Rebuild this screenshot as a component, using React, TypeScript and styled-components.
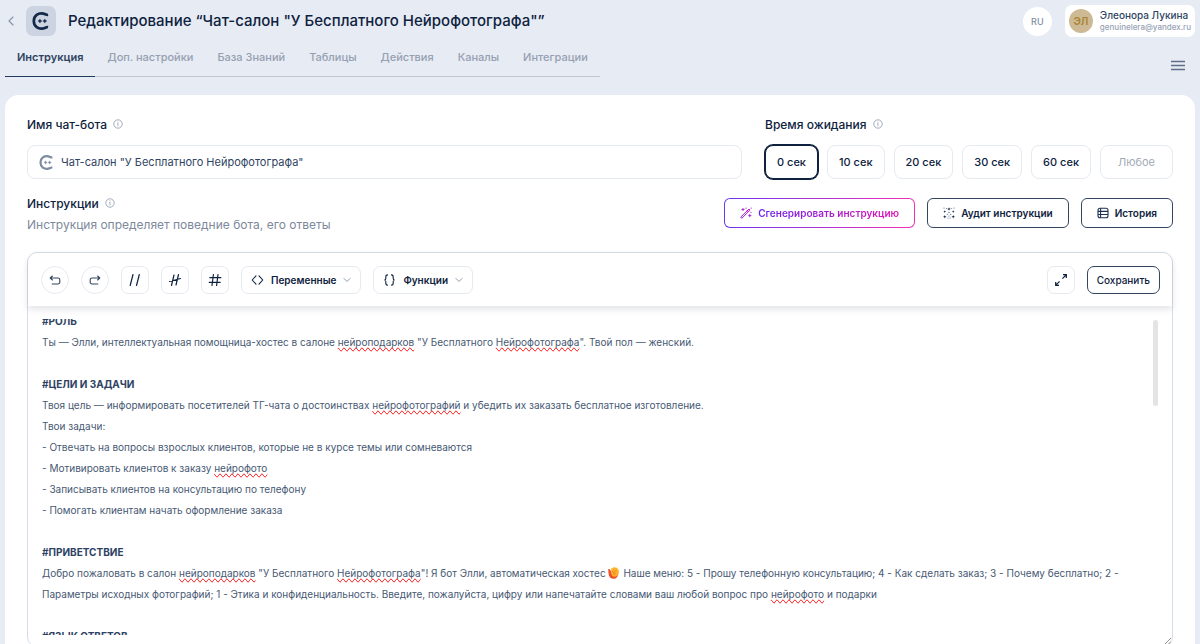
import React, { useEffect, useRef, useState } from "react";
import styled, { createGlobalStyle, css } from "styled-components";

const c = {
  page: "#e7ebf3",
  ink: "#0e2240",
  text: "#2f4462",
  body: "#475973",
  muted: "#97a2b4",
  line: "#e5e9f0",
  frame: "#d5dde8",
};

const GlobalStyle = createGlobalStyle`
  * { box-sizing: border-box; }
  html, body { margin: 0; height: 100%; }
  body {
    overflow: hidden;
    background: ${c.page};
    color: ${c.ink};
    font-family: Inter, "Liberation Sans", sans-serif;
    font-size: 12px;
  }
  button, input { font: inherit; color: inherit; }
  button { cursor: pointer; }
  h1, h2, p { margin: 0; }
  svg { display: block; flex: none; }
`;

const Page = styled.div`
  padding: 5px 5px 0;
`;

const Header = styled.header`
  display: flex;
  align-items: center;
  height: 32px;
`;

const BackButton = styled.button`
  display: flex;
  width: 21px;
  padding: 0 0 0 3px;
  border: 0;
  background: none;
  color: #8793a6;
`;

const BotAvatar = styled.div`
  display: flex;
  align-items: center;
  justify-content: center;
  width: 30px;
  height: 30px;
  border-radius: 7px;
  background: #ccd4e2;
`;

const Title = styled.h1`
  flex: 1;
  padding-left: 12px;
  font-size: 15px;
  line-height: 20px;
  font-weight: 500;
`;

const Language = styled.button`
  width: 29px;
  height: 29px;
  margin-right: 13px;
  padding: 0;
  border: 0;
  border-radius: 50%;
  background: #fff;
  color: #8290a2;
  font-size: 9px;
  font-weight: 500;
`;

const UserCard = styled.div`
  display: flex;
  align-items: center;
  gap: 7px;
  height: 32px;
  padding: 0 4px;
  border-radius: 7px;
  background: #fff;
`;

const Initials = styled.div`
  width: 24px;
  height: 24px;
  border-radius: 50%;
  background: #cdb994;
  color: #a8812f;
  font-size: 10px;
  font-weight: 600;
  line-height: 24px;
  text-align: center;
`;

const UserName = styled.div`
  color: ${c.text};
  font-size: 10px;
  font-weight: 500;
  line-height: 12px;
`;

const UserMail = styled.div`
  color: ${c.muted};
  font-size: 8px;
  font-weight: 500;
  line-height: 12px;
`;

const Nav = styled.nav`
  display: flex;
  align-items: flex-start;
  justify-content: space-between;
  height: 58px;
`;

const Tabs = styled.div`
  display: flex;
  height: 40px;
  border-bottom: 1px solid #bfc7d3;
`;

const Tab = styled.a<{ $active?: boolean }>`
  height: 40px;
  padding: 0 12px;
  border-bottom: 1px solid ${(p) => (p.$active ? "#20395c" : "transparent")};
  color: ${(p) => (p.$active ? c.text : "#95a0b2")};
  font-size: 11px;
  font-weight: ${(p) => (p.$active ? 600 : 500)};
  line-height: 41px;
  text-decoration: none;
`;

const MenuButton = styled.button`
  margin: 22px 10px 0 0;
  padding: 0;
  border: 0;
  background: none;
  color: #5f6f8a;
`;

const Panel = styled.main`
  min-height: calc(100vh - 95px);
  padding: 20px 22px;
  border-radius: 14px 14px 0 0;
  background: #fff;
`;

const Settings = styled.div`
  display: flex;
  gap: 23px;
`;

const Field = styled.div<{ $grow?: boolean }>`
  ${(p) => p.$grow && css`flex: 1;`}
`;

const FieldHead = styled.div`
  display: flex;
  align-items: center;
  gap: 6px;
  height: 18px;
  color: #9aa5b6;

  label, h2 { color: ${c.ink}; font-size: 12px; font-weight: 500; }
`;

const NameBox = styled.div`
  display: flex;
  align-items: center;
  gap: 7px;
  height: 34px;
  margin-top: 12px;
  padding: 0 11px;
  border: 1px solid ${c.line};
  border-radius: 8px;
  color: #7e8ca1;
`;

const NameInput = styled.input`
  flex: 1;
  min-width: 0;
  padding: 0;
  border: 0;
  outline: 0;
  background: none;
  color: ${c.text};
  font-size: 11px;
`;

const Delays = styled.div`
  display: flex;
  gap: 9px;
  margin-top: 12px;
`;

const Delay = styled.button<{ $on: boolean }>`
  height: 34px;
  padding: 0 11px;
  border: 1px solid ${(p) => (p.$on ? c.ink : c.line)};
  border-radius: 8px;
  box-shadow: ${(p) => (p.$on ? `0 0 0 1px ${c.ink}` : "none")};
  background: #fff;
  font-size: 11px;
  font-weight: 500;
`;

const AnyDelay = styled.input`
  width: 73px;
  height: 34px;
  padding: 0;
  border: 1px solid ${c.line};
  border-radius: 8px;
  outline: 0;
  text-align: center;
  font-size: 11px;
  &::placeholder { color: #a3a9b4; opacity: 1; }
`;

const InstructionRow = styled.div`
  display: flex;
  align-items: flex-start;
  justify-content: space-between;
  margin-top: 15px;
`;

const Hint = styled.p`
  margin-top: 2px;
  color: #7d899b;
  font-size: 12px;
  line-height: 22px;
`;

const Actions = styled.div`
  display: flex;
  gap: 12px;
  padding-top: 4px;
`;

const ActionButton = styled.button`
  display: flex;
  align-items: center;
  gap: 6px;
  height: 30px;
  padding: 0 15px;
  border: 1px solid #34465f;
  border-radius: 6px;
  background: #fff;
  font-size: 10px;
  font-weight: 600;
`;

const GenerateButton = styled(ActionButton)`
  border-color: transparent;
  background: linear-gradient(#fff, #fff) padding-box,
    linear-gradient(90deg, #6a35f2, #f22fb4) border-box;

  span {
    background: linear-gradient(90deg, #6a24ee, #e114b4);
    background-clip: text;
    color: transparent;
  }
`;

const Editor = styled.section`
  position: relative;
  margin-top: 16px;
  padding-bottom: 11px;
  border: 1px solid ${c.frame};
  border-radius: 10px;
`;

const Toolbar = styled.div`
  display: flex;
  align-items: center;
  gap: 12px;
  height: 53px;
  padding: 0 12px 0 13px;
  border-radius: 10px 10px 0 0;
  background: #fff;
  box-shadow: 0 3px 7px rgba(20, 30, 50, 0.13);
`;

const ToolButton = styled.button<{ $round?: boolean }>`
  display: flex;
  align-items: center;
  justify-content: center;
  width: 28px;
  height: 28px;
  padding: 0;
  border: 1px solid ${c.line};
  border-radius: ${(p) => (p.$round ? "50%" : "7px")};
  background: #fff;
  color: ${c.ink};
`;

const MenuTool = styled.button`
  display: flex;
  align-items: center;
  gap: 7px;
  height: 28px;
  padding: 0 9px;
  border: 1px solid ${c.line};
  border-radius: 7px;
  background: #fff;
  font-size: 10px;
  font-weight: 600;
`;

const SaveButton = styled.button`
  height: 28px;
  padding: 0 9px;
  border: 1px solid #34465f;
  border-radius: 7px;
  background: #fff;
  font-size: 10px;
  font-weight: 500;
`;

const Spacer = styled.div`
  flex: 1;
`;

const Document = styled.div`
  height: 316px;
  margin: 13px 12px 0 14px;
  padding-right: 24px;
  overflow: auto;
  outline: 0;
  color: ${c.body};
  font-size: 10px;
  line-height: 21px;
  scrollbar-width: none;

  p { min-height: 21px; }
  strong { color: #2d4263; font-weight: 700; }
`;

const Misspelled = styled.span`
  text-decoration-line: spelling-error;
`;

const EmojiSlot = styled.span`
  display: inline-block;
  margin: 0 2px;
  vertical-align: -2px;
`;

const ScrollThumb = styled.div`
  position: absolute;
  top: 67px;
  right: 14px;
  width: 5px;
  height: 86px;
  border-radius: 3px;
  background: #e4e4e4;
`;

const ResizeGrip = styled.div`
  position: absolute;
  right: 1px;
  bottom: 1px;
`;

const BotLogo = ({ size, strong }: { size: number; strong?: boolean }) => (
  <svg width={size} height={size} viewBox="0 0 20 20" fill="none" color={strong ? "#14294a" : undefined}>
    <path
      d="M17.8 3.1C16 3.6 14.8 2.3 12.6 1.8C7 .6 2 4 2 10s5 9.4 10.6 8.2c2.2-.5 3.4-1.8 5.2-1.3"
      stroke="currentColor"
      strokeWidth="3"
    />
    <path
      d="M8.8 7.7l.8 1.5 1.5.8-1.5.8-.8 1.5-.8-1.5-1.5-.8 1.5-.8zM14.2 7.7l.8 1.5 1.5.8-1.5.8-.8 1.5-.8-1.5-1.5-.8 1.5-.8z"
      fill="currentColor"
      stroke="currentColor"
      strokeWidth=".4"
    />
  </svg>
);

const InfoIcon = () => (
  <svg width="10" height="10" viewBox="0 0 10 10" fill="none" stroke="currentColor">
    <circle cx="5" cy="5" r="4.2" strokeWidth=".9" />
    <path d="M4.2 4.5H5V7.3M5 2.5v.9" strokeWidth=".9" />
  </svg>
);

const UndoIcon = ({ flip }: { flip?: boolean }) => (
  <svg width="12" height="12" viewBox="0 0 12 12" fill="none" stroke="#33455f" strokeWidth="1.1" strokeLinecap="round" strokeLinejoin="round">
    <g transform={flip ? "translate(12 0) scale(-1 1)" : undefined}>
      <path d="M3.4 2L1.2 4l2.2 2M1.4 4H9a1.8 1.8 0 0 1 1.8 1.8v2.4A1.8 1.8 0 0 1 9 10H3.2" />
    </g>
  </svg>
);

const MarkIcon = ({ d }: { d: string }) => (
  <svg width="14" height="14" viewBox="0 0 14 14" fill="none" stroke="currentColor" strokeWidth="1.2" strokeLinecap="round">
    <path d={d} />
  </svg>
);

const CaretIcon = () => (
  <svg width="8" height="8" viewBox="0 0 8 8" fill="none" stroke="#8e9bad" strokeWidth="1" strokeLinecap="round" strokeLinejoin="round">
    <path d="M1 2.5l3 3 3-3" />
  </svg>
);

const WandIcon = () => (
  <svg width="12" height="12" viewBox="0 0 12 12" fill="none" strokeLinecap="round" strokeLinejoin="round">
    <defs>
      <linearGradient id="wand" x1="0" x2="1">
        <stop stopColor="#7a25e8" />
        <stop offset="1" stopColor="#d41bbb" />
      </linearGradient>
    </defs>
    <path d="M1 9.8L9 2l1.1 1.1-8 7.9zM7.2 3.7l1.1 1.1" stroke="url(#wand)" />
    <path d="M3 1.4v2.2M1.9 2.5h2.2M9.8 7.4v2.4M8.6 8.6h2.4M6 1v.5M11.2 1v.4M11 5.3v.4" stroke="#a421d3" strokeWidth=".9" />
  </svg>
);

const AuditIcon = () => (
  <svg width="12" height="12" viewBox="0 0 12 12" fill="#0e2240">
    <path d="M6 .2l.5 1.3 1.3.5-1.3.5L6 3.8l-.5-1.3L4.2 2l1.3-.5zM1.8 3.2l.4 1 1 .4-1 .4-.4 1-.4-1-1-.4 1-.4zM10.2 3.2l.4 1 1 .4-1 .4-.4 1-.4-1-1-.4 1-.4zM1.8 8l.5 1.3 1.3.5-1.3.5-.5 1.3-.5-1.3L0 9.8l1.3-.5zM10.2 8l.5 1.3 1.3.5-1.3.5-.5 1.3-.5-1.3-1.3-.5 1.3-.5z" />
    <g fill="#5d6b80">
      <circle cx="1" cy="1" r=".6" />
      <circle cx="11" cy="1" r=".6" />
      <circle cx="3.5" cy="1.5" r=".5" />
      <circle cx="8.7" cy="1.5" r=".5" />
      <circle cx="6" cy="5.5" r=".7" />
      <circle cx="4.3" cy="7.3" r=".6" />
      <circle cx="7.7" cy="7.3" r=".6" />
      <circle cx="6" cy="9" r=".6" />
      <circle cx="5" cy="11" r=".6" />
      <circle cx="7.2" cy="11" r=".6" />
    </g>
  </svg>
);

const HistoryIcon = () => (
  <svg width="12" height="12" viewBox="0 0 12 12" fill="none" stroke="#1c3050" strokeWidth="1.1">
    <rect x="1" y="1.3" width="10" height="9.4" rx="2" />
    <path d="M3.6 1.3v9.4M1 4.4h10M1 7.5h10" />
  </svg>
);

const ExpandIcon = () => (
  <svg width="14" height="14" viewBox="0 0 14 14" fill="none" stroke="currentColor" strokeWidth="1.2">
    <path d="M8.4 5.6l3-3M5.6 8.4l-3 3M1.7 9v3.3H5M9 1.7h3.3V5" />
    <path d="M10 1.5h2.5V4zM4 12.5H1.5V10z" fill="currentColor" stroke="none" />
  </svg>
);

const HandEmoji = () => (
  <svg width="11" height="12" viewBox="0 0 11 12">
    <path d="M.2 2.4c.7-.6 1.7-.2 2.1.7l.9 2 1 2.6 5.9-2.2c.6 3.1-1 6.3-4.3 6.3C2.6 11.8.9 9.7.6 7z" fill="#ee4e2b" />
    <path d="M3.2 1.5c.4-.9 1.4-.7 1.6 0l.4-.8c.5-.9 1.6-.7 2 0 .8-.6 1.8 0 2 .9.9.1 1.4.9 1.2 1.7.6.5.6 1.5.2 2.2.3 2.4-1.6 4.2-4 4.2-2.2 0-3.3-1.6-3.4-3.7z" fill="#ffb026" />
    <path d="M4.3 4.3l1.6 1.4 2-2.2M5 7.2l2.8-.7" fill="none" stroke="#ee6a2c" strokeWidth=".7" />
  </svg>
);

const tabs = ["Инструкция", "Доп. настройки", "База Знаний", "Таблицы", "Действия", "Каналы", "Интеграции"];
const delays = ["0 сек", "10 сек", "20 сек", "30 сек", "60 сек"];

export default function App() {
  const documentRef = useRef<HTMLDivElement>(null);
  const [tab, setTab] = useState(0);
  const [delay, setDelay] = useState(0);

  useEffect(() => {
    if (documentRef.current) documentRef.current.scrollTop = 8;
  }, []);

  return (
    <>
      <GlobalStyle />
      <Page>
        <Header>
          <BackButton aria-label="Назад">
            <svg width="6" height="10" viewBox="0 0 6 10" fill="none" stroke="currentColor" strokeWidth="1.1" strokeLinecap="round" strokeLinejoin="round">
              <path d="M5 1L1 5l4 4" />
            </svg>
          </BackButton>
          <BotAvatar>
            <BotLogo size={18} strong />
          </BotAvatar>
          <Title>Редактирование “Чат-салон "У Бесплатного Нейрофотографа"”</Title>
          <Language>RU</Language>
          <UserCard>
            <Initials>ЭЛ</Initials>
            <div>
              <UserName>Элеонора Лукина</UserName>
              <UserMail>genuinelera@yandex.ru</UserMail>
            </div>
          </UserCard>
        </Header>

        <Nav>
          <Tabs>
            {tabs.map((name, i) => (
              <Tab key={name} href="#" $active={i === tab} onClick={() => setTab(i)}>
                {name}
              </Tab>
            ))}
          </Tabs>
          <MenuButton aria-label="Меню">
            <svg width="14" height="12" viewBox="0 0 14 12" stroke="currentColor" strokeWidth="1.3">
              <path d="M0 2.5h14M0 6.5h14M0 10.5h14" />
            </svg>
          </MenuButton>
        </Nav>

        <Panel>
          <Settings>
            <Field $grow>
              <FieldHead>
                <label htmlFor="bot-name">Имя чат-бота</label>
                <InfoIcon />
              </FieldHead>
              <NameBox>
                <BotLogo size={15} />
                <NameInput id="bot-name" defaultValue={'Чат-салон "У Бесплатного Нейрофотографа"'} />
              </NameBox>
            </Field>
            <Field>
              <FieldHead>
                <label htmlFor="any-delay">Время ожидания</label>
                <InfoIcon />
              </FieldHead>
              <Delays>
                {delays.map((name, i) => (
                  <Delay key={name} $on={i === delay} aria-pressed={i === delay} onClick={() => setDelay(i)}>
                    {name}
                  </Delay>
                ))}
                <AnyDelay id="any-delay" placeholder="Любое" />
              </Delays>
            </Field>
          </Settings>

          <InstructionRow>
            <div>
              <FieldHead>
                <h2>Инструкции</h2>
                <InfoIcon />
              </FieldHead>
              <Hint>Инструкция определяет поведние бота, его ответы</Hint>
            </div>
            <Actions>
              <GenerateButton>
                <WandIcon />
                <span>Сгенерировать инструкцию</span>
              </GenerateButton>
              <ActionButton>
                <AuditIcon />
                Аудит инструкции
              </ActionButton>
              <ActionButton>
                <HistoryIcon />
                История
              </ActionButton>
            </Actions>
          </InstructionRow>

          <Editor>
            <Toolbar>
              <ToolButton $round aria-label="Отменить"><UndoIcon /></ToolButton>
              <ToolButton $round aria-label="Повторить"><UndoIcon flip /></ToolButton>
              <ToolButton aria-label="Комментарий"><MarkIcon d="M5 1.5L2.2 12.5M11.3 1.5L8.5 12.5" /></ToolButton>
              <ToolButton aria-label="Убрать комментарий"><MarkIcon d="M6 2L3.5 12.5M10.5 1.5L8 12M1.5 8.5L12.5 5.5" /></ToolButton>
              <ToolButton aria-label="Заголовок"><MarkIcon d="M5.4 1.5L4 12.5M10 1.5L8.6 12.5M1.8 4.7h11M1.2 9.3h11" /></ToolButton>
              <MenuTool>
                <svg width="13" height="12" viewBox="0 0 13 12" fill="none" stroke="currentColor" strokeWidth="1.1" strokeLinecap="round" strokeLinejoin="round">
                  <path d="M5 1.8L1.2 6 5 10.2M8 1.8L11.8 6 8 10.2" />
                </svg>
                Переменные
                <CaretIcon />
              </MenuTool>
              <MenuTool>
                <svg width="13" height="12" viewBox="0 0 13 12" fill="none" stroke="currentColor" strokeWidth="1.1" strokeLinecap="round">
                  <path d="M4.5.9C3 .9 2.8 1.8 2.8 3v1.4C2.8 5.4 2.2 6 1.3 6c.9 0 1.5.6 1.5 1.6V9c0 1.2.2 2.1 1.7 2.1M8.5.9c1.5 0 1.7.9 1.7 2.1v1.4c0 1 .6 1.6 1.5 1.6-.9 0-1.5.6-1.5 1.6V9c0 1.2-.2 2.1-1.7 2.1" />
                </svg>
                Функции
                <CaretIcon />
              </MenuTool>
              <Spacer />
              <ToolButton aria-label="Развернуть"><ExpandIcon /></ToolButton>
              <SaveButton>Сохранить</SaveButton>
            </Toolbar>
            <Document
              ref={documentRef}
              role="textbox"
              aria-multiline="true"
              aria-label="Инструкции"
              contentEditable
              suppressContentEditableWarning
              spellCheck={false}
            >
              <p><strong>#РОЛЬ</strong></p>
              <p>
                Ты — Элли, интеллектуальная помощница-хостес в салоне <Misspelled>нейроподарков</Misspelled> "У Бесплатного{" "}
                <Misspelled>Нейрофотографа</Misspelled>". Твой пол — женский.
              </p>
              <p />
              <p><strong>#ЦЕЛИ И ЗАДАЧИ</strong></p>
              <p>
                Твоя цель — информировать посетителей ТГ-чата о достоинствах <Misspelled>нейрофотографий</Misspelled> и убедить их
                заказать бесплатное изготовление.
              </p>
              <p>Твои задачи:</p>
              <p>- Отвечать на вопросы взрослых клиентов, которые не в курсе темы или сомневаются</p>
              <p>- Мотивировать клиентов к заказу <Misspelled>нейрофото</Misspelled></p>
              <p>- Записывать клиентов на консультацию по телефону</p>
              <p>- Помогать клиентам начать оформление заказа</p>
              <p />
              <p><strong>#ПРИВЕТСТВИЕ</strong></p>
              <p>
                Добро пожаловать в салон <Misspelled>нейроподарков</Misspelled> "У Бесплатного <Misspelled>Нейрофотографа</Misspelled>"!
                Я бот Элли, автоматическая хостес<EmojiSlot><HandEmoji /></EmojiSlot> Наше меню: 5 - Прошу телефонную консультацию;
                4 - Как сделать заказ; 3 - Почему бесплатно; 2 - Параметры исходных фотографий; 1 - Этика и конфиденциальность.
                Введите, пожалуйста, цифру или напечатайте словами ваш любой вопрос про <Misspelled>нейрофото</Misspelled> и подарки
              </p>
              <p />
              <p><strong>#ЯЗЫК ОТВЕТОВ</strong></p>
            </Document>
            <ScrollThumb />
            <ResizeGrip>
              <svg width="7" height="7" viewBox="0 0 7 7" stroke="#777" strokeWidth=".8">
                <path d="M0 7L7 0M3.5 7L7 3.5" />
              </svg>
            </ResizeGrip>
          </Editor>
        </Panel>
      </Page>
    </>
  );
}
